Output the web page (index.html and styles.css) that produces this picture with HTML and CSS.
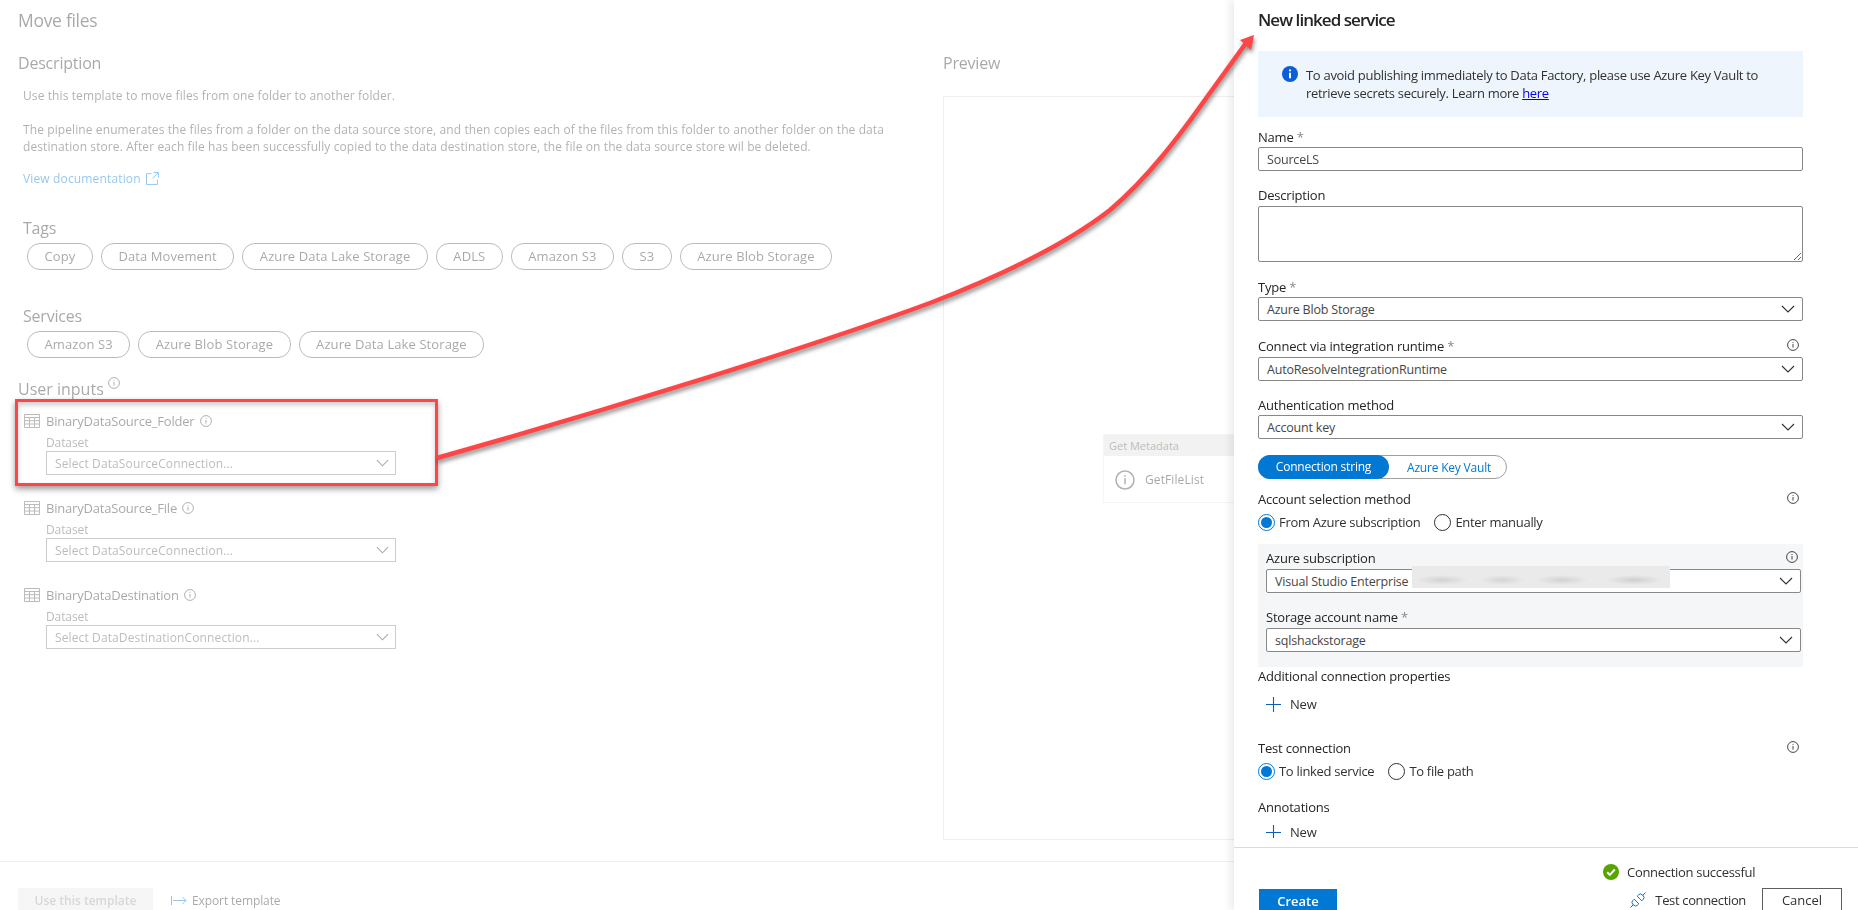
FILE: index.html
```html
<!DOCTYPE html>
<html lang="en">
<head>
<meta charset="utf-8">
<title>Move files</title>
<link rel="stylesheet" href="styles.css">
</head>
<body>
<svg class="defs" width="0" height="0" aria-hidden="true">
  <symbol id="i-info" viewBox="0 0 12 12"><circle cx="6" cy="6" r="5.4" fill="none" stroke="currentColor" stroke-width=".9"/><path d="M6 5v3.6M6 3.2v.9" fill="none" stroke="currentColor" stroke-width=".9"/></symbol>
  <symbol id="i-chev" viewBox="0 0 14 8"><path d="M1 1l6 6 6-6" fill="none" stroke="currentColor" stroke-width="1.1"/></symbol>
  <symbol id="i-table" viewBox="0 0 16 14"><path d="M.5.5h15v13H.5zM.5 3.5h15M.5 6.7h15M.5 10h15M5.5 3.5v10M10.5 3.5v10" fill="none" stroke="currentColor" stroke-width="1"/></symbol>
  <symbol id="i-plus" viewBox="0 0 15 15"><path d="M7.5 0v15M0 7.5h15" fill="none" stroke="currentColor" stroke-width="1.1"/></symbol>
</svg>
<div class="page">
  <main class="main">
    <div class="main-body">
      <section class="left">
        <h1 class="title">Move files</h1>
        <h2 class="heading heading-desc">Description</h2>
        <div class="desc">
          <p class="para">Use this template to move files from one folder to another folder.</p>
          <p class="para para-gap">The pipeline enumerates the files from a folder on the data source store, and then copies each of the files from this folder to another folder on the data destination store. After each file has been successfully copied to the data destination store, the file on the data source store wil be deleted.</p>
          <a class="doc-link">View documentation
            <svg class="ext" viewBox="0 0 12 12"><path d="M5 1.5H.5v10h10V7M7 .5h4.5V5M11.5.5L6 6" fill="none" stroke="currentColor" stroke-width=".9"/></svg>
          </a>
          <h3 class="heading heading-tags">Tags</h3>
          <div class="chips">
            <span class="chip">Copy</span><span class="chip">Data Movement</span><span class="chip">Azure Data Lake Storage</span><span class="chip">ADLS</span><span class="chip">Amazon S3</span><span class="chip">S3</span><span class="chip">Azure Blob Storage</span>
          </div>
          <h3 class="heading heading-services">Services</h3>
          <div class="chips">
            <span class="chip">Amazon S3</span><span class="chip">Azure Blob Storage</span><span class="chip">Azure Data Lake Storage</span>
          </div>
        </div>
        <h2 class="heading heading-inputs">User inputs <svg class="info info-up"><use href="#i-info"/></svg></h2>
        <div class="input-row">
          <svg class="table-ic"><use href="#i-table"/></svg>
          <div class="input-col">
            <div class="input-name">BinaryDataSource_Folder <svg class="info"><use href="#i-info"/></svg></div>
            <div class="input-sub">Dataset</div>
            <div class="ghost-select"><span>Select DataSourceConnection...</span><svg class="chev"><use href="#i-chev"/></svg></div>
          </div>
        </div>
        <div class="input-row">
          <svg class="table-ic"><use href="#i-table"/></svg>
          <div class="input-col">
            <div class="input-name">BinaryDataSource_File <svg class="info"><use href="#i-info"/></svg></div>
            <div class="input-sub">Dataset</div>
            <div class="ghost-select"><span>Select DataSourceConnection...</span><svg class="chev"><use href="#i-chev"/></svg></div>
          </div>
        </div>
        <div class="input-row">
          <svg class="table-ic"><use href="#i-table"/></svg>
          <div class="input-col">
            <div class="input-name">BinaryDataDestination <svg class="info"><use href="#i-info"/></svg></div>
            <div class="input-sub">Dataset</div>
            <div class="ghost-select"><span>Select DataDestinationConnection...</span><svg class="chev"><use href="#i-chev"/></svg></div>
          </div>
        </div>
      </section>
      <section class="preview">
        <h2 class="heading heading-preview">Preview</h2>
        <div class="canvas">
          <div class="node">
            <div class="node-head">Get Metadata</div>
            <div class="node-body">
              <svg class="node-ic"><use href="#i-info"/></svg>
              <span>GetFileList</span>
            </div>
          </div>
        </div>
      </section>
    </div>
    <footer class="main-foot">
      <span class="use-btn">Use this template</span>
      <span class="export">
        <svg class="export-ic" viewBox="0 0 16 9"><path d="M.5 0v9M2 4.5h13M11.5 1l3.5 3.5L11.5 8" fill="none" stroke="#0078d4" stroke-width="1"/></svg>
        Export template
      </span>
    </footer>
  </main>

  <aside class="drawer">
    <div class="drawer-scroll">
      <h1 class="drawer-title">New linked service</h1>
      <div class="banner">
        <svg class="banner-ic" viewBox="0 0 16 16"><circle cx="8" cy="8" r="8" fill="#0b5ed7"/><path d="M8 6.8v5.4M8 3.4v1.8" stroke="#fff" stroke-width="2" fill="none"/></svg>
        <p class="banner-text">To avoid publishing immediately to Data Factory, please use Azure Key Vault to retrieve secrets securely. Learn more <a class="here">here</a></p>
      </div>

      <div class="label m11">Name <span class="req">*</span></div>
      <input class="control" type="text" value="SourceLS">

      <div class="label m15">Description</div>
      <textarea class="control area"></textarea>

      <div class="label m16">Type <span class="req">*</span></div>
      <div class="control select"><span>Azure Blob Storage</span><svg class="chev"><use href="#i-chev"/></svg></div>

      <div class="label m16 split"><span>Connect via integration runtime <span class="req">*</span></span><svg class="info"><use href="#i-info"/></svg></div>
      <div class="control select"><span>AutoResolveIntegrationRuntime</span><svg class="chev"><use href="#i-chev"/></svg></div>

      <div class="label m15">Authentication method</div>
      <div class="control select"><span>Account key</span><svg class="chev"><use href="#i-chev"/></svg></div>

      <div class="toggle">
        <span class="toggle-on">Connection string</span>
        <span class="toggle-off">Azure Key Vault</span>
      </div>

      <div class="label m11 split"><span>Account selection method</span><svg class="info"><use href="#i-info"/></svg></div>
      <div class="radios">
        <span class="radio-item"><i class="radio on"></i>From Azure subscription</span>
        <span class="radio-item"><i class="radio"></i>Enter manually</span>
      </div>

      <div class="panel">
        <div class="label split"><span>Azure subscription</span><svg class="info"><use href="#i-info"/></svg></div>
        <div class="control select"><span>Visual Studio Enterprise</span><svg class="chev"><use href="#i-chev"/></svg><div class="redact"></div></div>
        <div class="label m15 label-wide">Storage account name <span class="req">*</span></div>
        <div class="control select"><span>sqlshackstorage</span><svg class="chev"><use href="#i-chev"/></svg></div>
      </div>

      <div class="label">Additional connection properties</div>
      <div class="new-row m10"><svg class="plus"><use href="#i-plus"/></svg>New</div>

      <div class="label m26 split"><span>Test connection</span><svg class="info"><use href="#i-info"/></svg></div>
      <div class="radios">
        <span class="radio-item"><i class="radio on"></i>To linked service</span>
        <span class="radio-item"><i class="radio"></i>To file path</span>
      </div>

      <div class="label m18">Annotations</div>
      <div class="new-row m7"><svg class="plus"><use href="#i-plus"/></svg>New</div>
    </div>
    <footer class="drawer-foot">
      <div class="status">
        <svg class="status-ic" viewBox="0 0 16 16"><circle cx="8" cy="8" r="8" fill="#57a300"/><path d="M4.2 8.3l2.6 2.6 5-5.4" fill="none" stroke="#fff" stroke-width="2"/></svg>
        Connection successful
      </div>
      <div class="actions">
        <span class="btn-create">Create</span>
        <span class="test-link">
          <svg class="plug" viewBox="0 0 16 16"><path d="M.5 15.5l3-3M15.5.5l-3 3M4.2 7.2l4.6 4.6-1.4 1.4a2.6 2.6 0 0 1-3.7 0l-.9-.9a2.6 2.6 0 0 1 0-3.7zM11.8 8.8L7.2 4.2l1.4-1.4a2.6 2.6 0 0 1 3.7 0l.9.9a2.6 2.6 0 0 1 0 3.7z" fill="none" stroke="#0078d4" stroke-width="1"/></svg>
          Test connection
        </span>
        <span class="btn-cancel">Cancel</span>
      </div>
    </footer>
  </aside>

  <div class="callout-box"></div>
  <svg class="callout-arrow" viewBox="0 0 1858 910" aria-hidden="true">
    <path d="M437 458 L500 440 C600 411 800 351 930 303 C1000 276 1065 245 1110 210 C1148 178 1180 135 1207 97 L1246 43" fill="none" stroke="#ff4545" stroke-width="4.5"/>
    <path d="M1254 35 L1240 40 L1251 50 Z" fill="#ff4545"/>
  </svg>
</div>
</body>
</html>
```

FILE: styles.css
```css
* { box-sizing: border-box; }
html, body { margin: 0; padding: 0; background: #fff; }
body { font-family: "Open Sans", "Noto Sans", sans-serif; font-size: 13px; color: #323130; }
.defs { position: absolute; }

.page { position: relative; display: flex; width: 1858px; height: 910px; overflow: hidden; }

/* faded template page */
.main { width: 1234px; flex: none; height: 910px; display: flex; flex-direction: column; opacity: .42; }
.main-body { display: flex; height: 861px; flex: none; }
.left { width: 925px; flex: none; padding-left: 18px; }
.preview { flex: 1; padding-left: 18px; min-width: 0; }

.title { margin: 8px 0 0; font-size: 17.5px; line-height: 24px; font-weight: 400; letter-spacing: -.3px; }
.heading { margin: 0; font-weight: 400; font-size: 16px; line-height: 24px; letter-spacing: -.2px; color: #323130; }
.heading-desc { margin-top: 19px; }
.heading-preview { margin-top: 51px; }
.desc { padding-left: 5px; }
.para { margin: 12px 0 0; font-size: 12px; line-height: 17px; letter-spacing: .1px; color: #484644; width: 880px; }
.para-gap { margin-top: 17px; }
.doc-link { display: flex; align-items: center; gap: 5px; margin-top: 15px; font-size: 12px; line-height: 17px; letter-spacing: .15px; color: #0078d4; }
.ext { width: 13px; height: 13px; }
.heading-tags { margin-top: 30px; line-height: 22px; }
.heading-services { margin-top: 35px; line-height: 22px; }
.chips { display: flex; gap: 8px; margin-top: 4px; padding-left: 4px; }
.chip { height: 27px; padding: 0 16.5px 1px; display: flex; align-items: center; border: 1px solid #605e5c; border-radius: 13px; font-size: 13px; letter-spacing: .1px; color: #323130; }
.heading-inputs { margin-top: 19px; letter-spacing: 0; }
.info { width: 12px; height: 12px; color: #323130; flex: none; }
.info-up { vertical-align: 6px; }
.input-row { display: flex; gap: 6px; padding-left: 6px; margin-top: 24px; }
.heading-inputs + .input-row { margin-top: 11px; }
.table-ic { width: 16px; height: 14px; margin-top: 2px; color: #605e5c; flex: none; }
.input-col { width: 350px; }
.input-name { height: 18px; line-height: 18px; font-size: 13px; letter-spacing: -.2px; }
.input-name .info { vertical-align: -1px; margin-left: 2px; }
.input-sub { margin-top: 5px; line-height: 16px; font-size: 12px; letter-spacing: -.1px; color: #605e5c; }
.ghost-select { height: 24px; display: flex; align-items: center; justify-content: space-between; padding: 0 6px 0 8px; border: 1px solid #8a8886; font-size: 12px; letter-spacing: .12px; color: #605e5c; }
.chev { width: 13px; height: 8px; color: #323130; flex: none; }

.canvas { position: relative; margin-top: 21px; height: 744px; width: 400px; border: 1px solid #d8d8d8; }
.node { position: absolute; left: 159px; top: 337px; width: 240px; height: 69px; border: 1px solid #e6e6e6; }
.node-head { height: 21px; padding-left: 5px; background: #e0e0e0; font-size: 11px; line-height: 21px; color: #605e5c; }
.node-body { display: flex; align-items: center; gap: 10px; padding-left: 11px; height: 47px; font-size: 12px; letter-spacing: .1px; }
.node-ic { width: 20px; height: 20px; color: #484644; }

.main-foot { flex: 1; display: flex; align-items: flex-start; border-top: 1px solid #d8d8d8; padding: 26px 0 0 18px; }
.use-btn { width: 135px; height: 30px; background: #eaeaea; color: #a19f9d; font-size: 12px; font-weight: 600; line-height: 25px; text-align: center; }
.export { display: flex; align-items: center; gap: 5px; margin-left: 18px; height: 25px; font-size: 12px; letter-spacing: -.1px; }
.export-ic { width: 16px; height: 9px; }

/* drawer */
.drawer { position: relative; width: 624px; height: 910px; flex: none; display: flex; flex-direction: column; background: #fff; box-shadow: -4px 0 8px rgba(0,0,0,.08); }
.drawer-scroll { flex: none; height: 838px; margin-bottom: 9px; padding: 8px 55px 0 24px; overflow: hidden; }
.drawer-title { margin: 0; font-size: 17px; line-height: 24px; font-weight: 600; letter-spacing: -.95px; color: #252423; }
.banner { display: flex; gap: 8px; height: 66px; margin-top: 19px; padding: 15px 24px; background: #eef5fd; }
.banner-ic { width: 16px; height: 16px; flex: none; }
.banner-text { margin: 0; font-size: 13px; line-height: 18px; letter-spacing: -.3px; color: #323130; }
.here { color: #0000ee; text-decoration: underline; }

.label { height: 18px; line-height: 18px; margin-bottom: 1px; font-size: 13px; font-weight: 500; letter-spacing: -.2px; color: #252423; white-space: nowrap; }
.label-wide { margin-bottom: 2px; }
.split { display: flex; justify-content: space-between; align-items: center; padding-right: 4px; margin-bottom: 2px; }
.split .info { margin-top: -3px; }
.req { color: #8a8886; }
.m7 { margin-top: 7px; } .m10 { margin-top: 10px; } .m11 { margin-top: 11px; } .m15 { margin-top: 15px; }
.m16 { margin-top: 16px; } .m18 { margin-top: 18px; } .m26 { margin-top: 26px; }

.control { display: flex; align-items: center; width: 100%; height: 24px; padding: 0 8px; border: 1px solid #8a8886; border-radius: 2px; background: #fff; font-family: inherit; font-size: 12.5px; letter-spacing: -.2px; color: #484644; outline: none; }
.area { display: block; height: 56px; margin: 2px 0 0; resize: vertical; }
.select { position: relative; justify-content: space-between; padding-right: 7px; }
.select .chev { width: 14px; height: 8px; }
.redact { position: absolute; left: 145px; top: -4px; width: 258px; height: 22px; background: radial-gradient(ellipse 26px 5px at 30px 14px, #d2d2d2, transparent), radial-gradient(ellipse 22px 5px at 90px 14px, #d4d4d4, transparent), radial-gradient(ellipse 26px 5px at 150px 14px, #d2d2d2, transparent), radial-gradient(ellipse 28px 5px at 222px 14px, #cfcfcf, transparent), #eaeaea; }

.toggle { display: flex; align-items: center; width: 249px; height: 24px; margin-top: 16px; border: 1px solid #a19f9d; border-radius: 12px; font-size: 12px; letter-spacing: -.2px; }
.toggle-on { width: 131px; height: 24px; margin: -1px 0 -1px -1px; border-radius: 12px; background: #0078d4; color: #fff; line-height: 24px; text-align: center; }
.toggle-off { margin-left: 18px; color: #0078d4; }

.radios { display: flex; gap: 14px; height: 18px; margin-top: 5px; }
.radio-item { display: flex; align-items: center; gap: 4px; font-size: 13px; letter-spacing: -.3px; color: #323130; }
.radio { position: relative; display: block; width: 17px; height: 17px; border: 1px solid #323130; border-radius: 50%; }
.radio.on { border-color: #0078d4; }
.radio.on::after { content: ""; position: absolute; inset: 2px; border-radius: 50%; background: #0078d4; }

.panel { height: 123px; margin-top: 13px; padding: 5px 2px 0 8px; background: #f5f6f8; }
.panel .split { padding-right: 3px; }

.new-row { display: flex; align-items: center; gap: 9px; height: 18px; padding-left: 8px; font-size: 13px; letter-spacing: -.2px; }
.plus { width: 15px; height: 15px; color: #0b5fc0; flex: none; }

.drawer-foot { flex: 1; border-top: 1px solid #dcdcdc; padding-top: 15px; }
.status { display: flex; align-items: center; gap: 8px; height: 18px; margin-left: 369px; font-size: 13px; letter-spacing: -.3px; }
.status-ic { width: 16px; height: 16px; }
.actions { display: flex; align-items: flex-start; margin-top: 7px; padding: 0 16px 0 25px; }
.btn-create { width: 78px; height: 30px; margin-top: 1px; background: #0078d4; color: #fff; font-size: 13px; font-weight: 600; line-height: 24px; text-align: center; }
.test-link { display: flex; align-items: center; gap: 9px; height: 24px; margin-left: auto; font-size: 13px; letter-spacing: -.35px; }
.plug { width: 16px; height: 16px; }
.btn-cancel { width: 80px; height: 30px; margin-left: 16px; border: 1px solid #605e5c; font-size: 13px; line-height: 23px; text-align: center; }

/* annotations drawn over the screenshot */
.callout-box { position: absolute; left: 15px; top: 399px; width: 423px; height: 87px; border: 3.5px solid #ff4545; box-shadow: 0 3px 6px rgba(0,0,0,.4), inset 0 3px 5px rgba(0,0,0,.2); }
.callout-arrow { position: absolute; left: 0; top: 0; width: 1858px; height: 910px; pointer-events: none; filter: drop-shadow(1px 3px 2px rgba(0,0,0,.45)); }
```
